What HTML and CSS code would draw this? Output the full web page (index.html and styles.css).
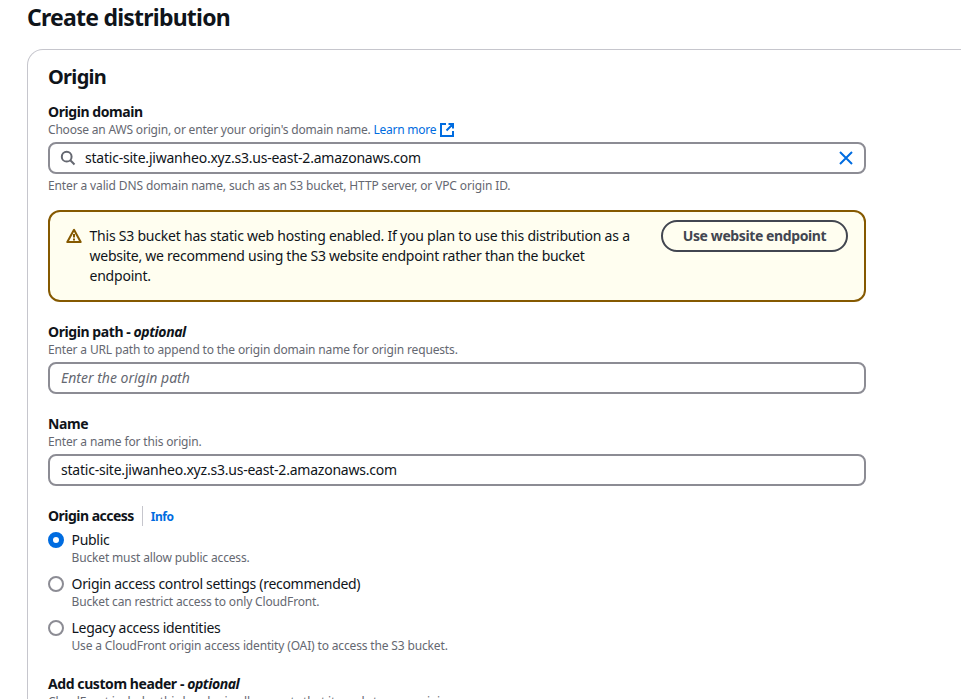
FILE: index.html
```html
<!DOCTYPE html>
<html lang="en">
<head>
<meta charset="utf-8">
<title>Create distribution</title>
<link rel="stylesheet" href="styles.css">
</head>
<body>
<main class="page">
  <h1><span>Create distribution</span></h1>
  <section class="card">
    <h2><span>Origin</span></h2>
    <div class="field">
      <label class="label"><span>Origin domain</span></label>
      <p class="hint tight"><span>Choose an AWS origin, or enter your origin's domain name.</span> <a class="learn">Learn more</a><svg class="external" width="16" height="16" viewBox="0 0 16 16"><path d="M7 2H2v12h12V9M9.500 2H14v4.500M14 2L7.500 8.500"/></svg></p>
      <div class="input search">
        <svg class="glass" width="16" height="16" viewBox="0 0 16 16"><circle cx="6.700" cy="6.700" r="4.900"/><path d="M10.300 10.300l4.200 4.200"/></svg>
        <span class="value">static-site.jiwanheo.xyz.s3.us-east-2.amazonaws.com</span>
        <svg class="clear" width="16" height="16" viewBox="0 0 16 16"><path d="M2 2l12 12M14 2L2 14"/></svg>
      </div>
      <p class="hint below"><span>Enter a valid DNS domain name, such as an S3 bucket, HTTP server, or VPC origin ID.</span></p>
    </div>
    <div class="alert">
      <svg class="warning" width="16" height="16" viewBox="0 0 16 16"><path d="M8 1.800L1.300 14h13.400zM8 6v3.500M8 10.500v2"/></svg>
      <p class="message">This S3 bucket has static web hosting enabled. If you plan to use this distribution as a<br><span class="second">website, we recommend using the S3 website endpoint rather than the bucket</span><br>endpoint.</p>
      <button class="button"><span>Use website endpoint</span></button>
    </div>
    <div class="field">
      <label class="label"><span>Origin path - <i>optional</i></span></label>
      <p class="hint"><span>Enter a URL path to append to the origin domain name for origin requests.</span></p>
      <div class="input"><span class="placeholder">Enter the origin path</span></div>
    </div>
    <div class="field">
      <label class="label"><span>Name</span></label>
      <p class="hint"><span>Enter a name for this origin.</span></p>
      <div class="input"><span class="value">static-site.jiwanheo.xyz.s3.us-east-2.amazonaws.com</span></div>
    </div>
    <div class="field access">
      <div class="label"><span>Origin access</span><a class="info">Info</a></div>
      <div class="option"><i class="radio checked"></i><div><p class="choice">Public</p><p class="hint">Bucket must allow public access.</p></div></div>
      <div class="option"><i class="radio"></i><div><p class="choice">Origin access control settings (recommended)</p><p class="hint">Bucket can restrict access to only CloudFront.</p></div></div>
      <div class="option"><i class="radio"></i><div><p class="choice">Legacy access identities</p><p class="hint">Use a CloudFront origin access identity (OAI) to access the S3 bucket.</p></div></div>
    </div>
    <div class="field">
      <div class="label"><span>Add custom header - <i>optional</i></span></div>
      <p class="hint tight">CloudFront includes this header in all requests that it sends to your origin.</p>
    </div>
  </section>
</main>
</body>
</html>
```
FILE: styles.css
```css
* { box-sizing: border-box; }
html, body { height: 100%; overflow: hidden; }
body { margin: 0; background: #fff; color: #0f141a; font: 14px/20px "Noto Sans", sans-serif; letter-spacing: -0.22px; }
h1, h2, p { margin: 0; white-space: nowrap; }
.page { height: 699px; overflow: hidden; padding: 2px 0 0 27px; }
h1 { font-size: 23px; line-height: 30px; letter-spacing: -0.77px; }
.card { width: 960px; height: 650px; overflow: hidden; margin-top: 17px; padding: 15px 20px 0; border: 1px solid #c6c6cd; border-bottom: 0; border-radius: 16px 16px 0 0; }
h2 { font-size: 20px; line-height: 24px; letter-spacing: -0.7px; }
.field { width: 818px; margin-top: 20px; }
h2 + .field { margin-top: 13px; }
.label { display: flex; height: 20px; font-weight: 700; white-space: pre; letter-spacing: -0.42px; }
.access .label { letter-spacing: -0.52px; }
.hint { height: 16px; font-size: 12px; line-height: 16px; color: #656871; letter-spacing: -0.15px; }
.tight { letter-spacing: -0.19px; }
.input { display: flex; align-items: center; height: 32px; margin-top: 4px; padding: 0 11px; border: 2px solid #8c8c94; border-radius: 8px; }
.placeholder { color: #656871; font-style: italic; letter-spacing: 0; }
.below { margin-top: 4px; letter-spacing: -0.13px; }
svg { display: block; flex: none; fill: none; stroke-width: 2; }
.learn { color: #006ce0; letter-spacing: -0.26px; }
.external { display: inline-block; margin-left: 3px; vertical-align: -4px; stroke: #006ce0; }
.search { padding: 0 10px; }
.search .value { flex: 1; margin-left: 9px; }
.glass { stroke: #656871; }
.clear { stroke: #006ce0; }
.alert { display: flex; width: 818px; height: 92px; margin-top: 16px; padding: 8px 16px; border: 2px solid #855900; border-radius: 12px; background: #fffef0; }
.warning { margin-top: 8px; stroke: #855900; stroke-linejoin: round; }
.message { flex: 1; margin: 6px 0 0 7.5px; }
.second { letter-spacing: -0.26px; }
.button { width: 187px; height: 32px; padding: 0; border: 2px solid #424650; border-radius: 20px; background: #fffef0; color: #424650; font: inherit; font-weight: 700; letter-spacing: -0.4px; }
.info { height: 20px; margin-left: 8px; padding: 1px 0 0 8px; border-left: 1px solid #c6c6cd; color: #006ce0; font-size: 12px; letter-spacing: -0.5px; }
.option { display: flex; gap: 7.5px; margin-top: 8px; }
.label + .option { margin-top: 4px; }
.choice { letter-spacing: -0.3px; }
.radio { width: 16px; height: 16px; margin-top: 2px; border: 2px solid #8c8c94; border-radius: 50%; }
.checked { border: 5px solid #006ce0; }
```
